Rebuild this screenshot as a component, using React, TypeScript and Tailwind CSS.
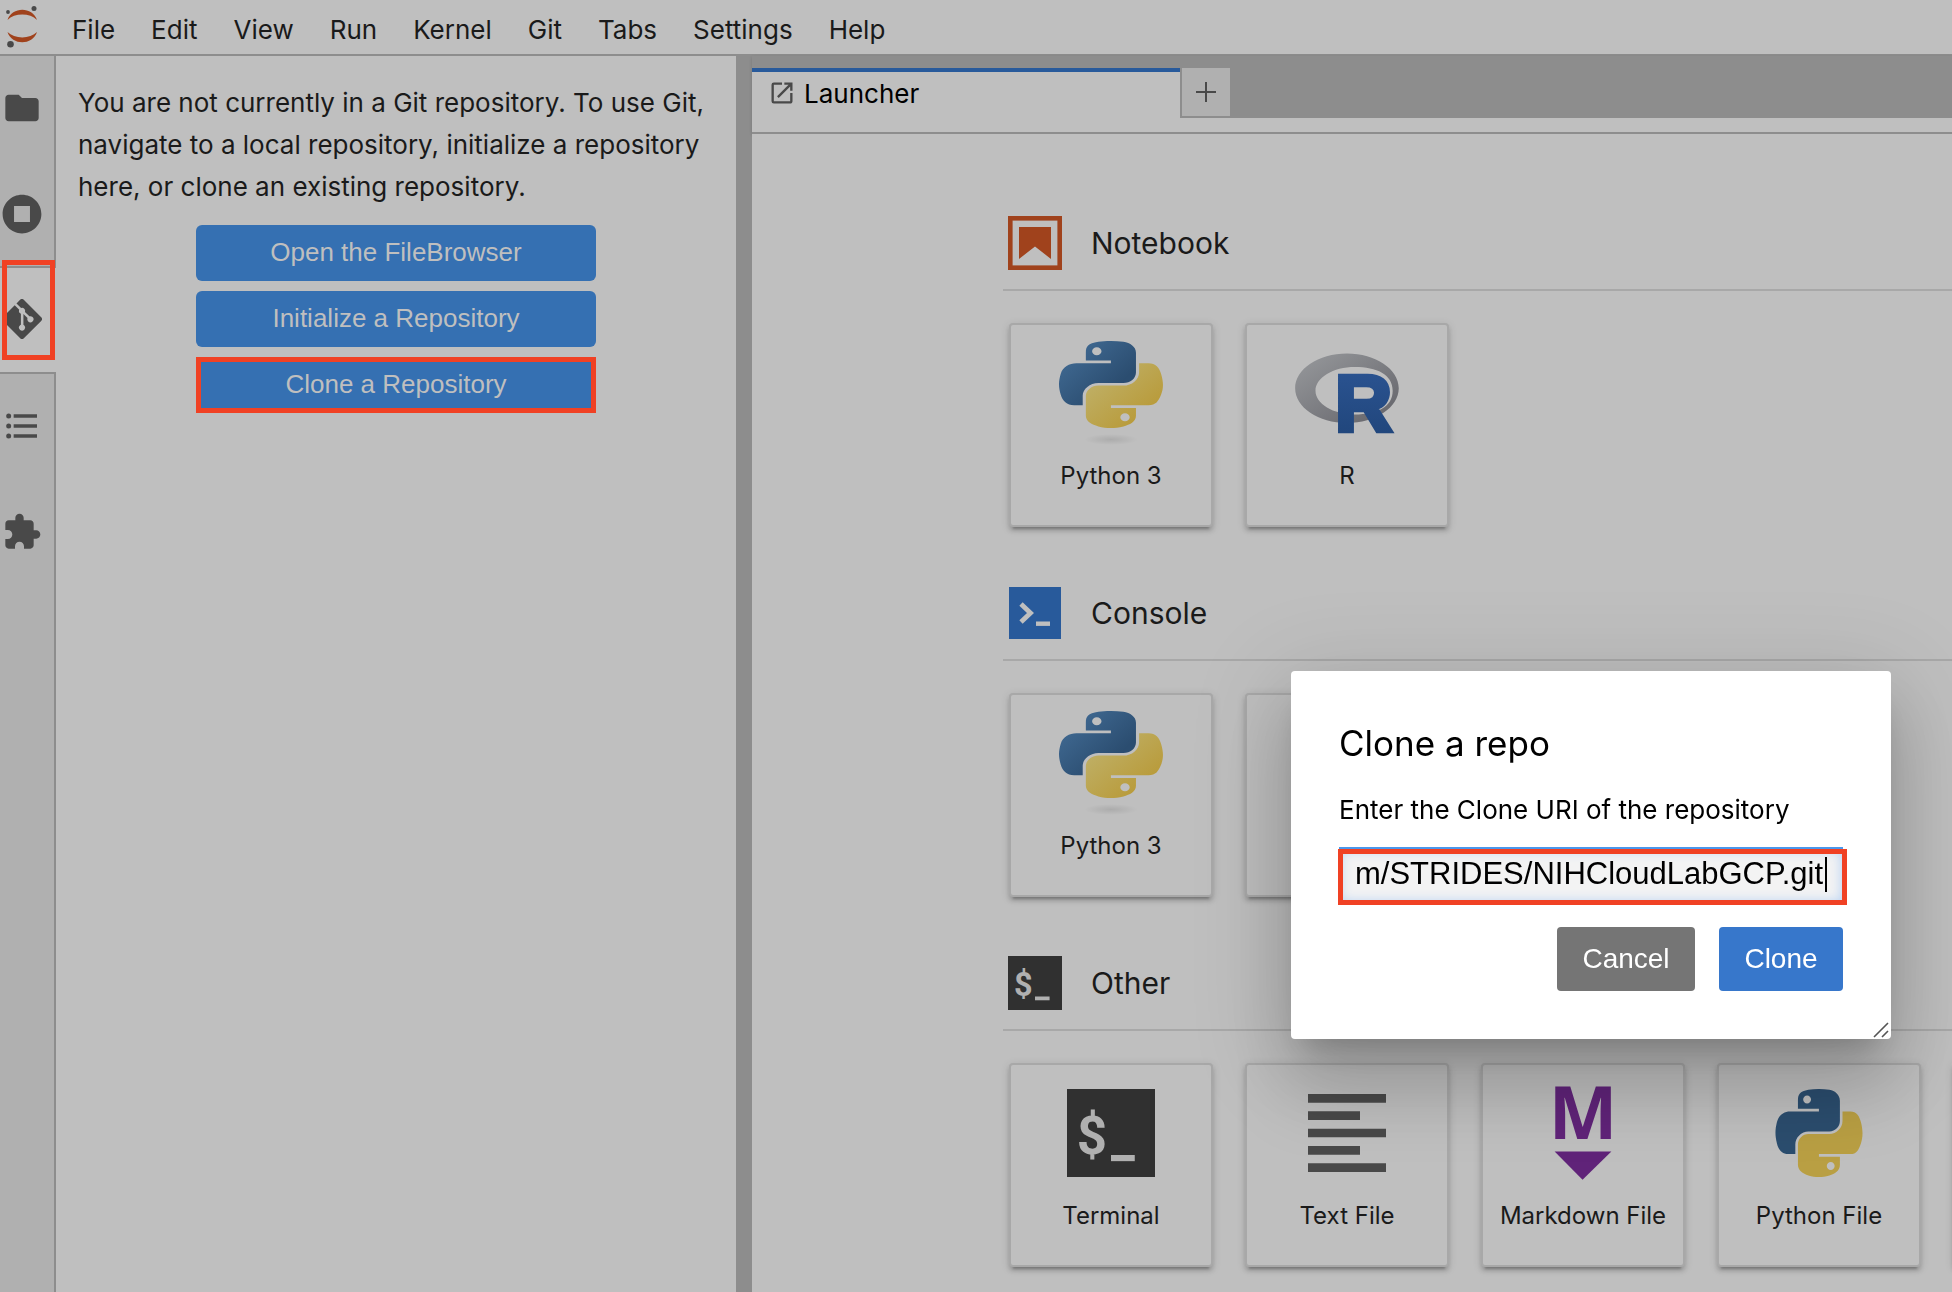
import React from "react";

type IconProps = { className?: string };

function JupyterLogo() {
  return (
    <svg viewBox="0 0 44 54" className="h-[54px] w-11 shrink-0" aria-hidden="true">
      <path d="M7.5 20C12 6.3 32.5 6.3 37 20C30 12.8 14.5 12.8 7.5 20Z" fill="#a0421c" />
      <path d="M7.5 32C12 45.7 32.5 45.7 37 32C30 39.2 14.5 39.2 7.5 32Z" fill="#a0421c" />
      <circle cx="34" cy="8.6" r="2.5" fill="#494949" />
      <circle cx="8" cy="12" r="1.9" fill="#494949" />
      <circle cx="10.5" cy="44.2" r="3.3" fill="#494949" />
    </svg>
  );
}

function FolderIcon() {
  return (
    <svg viewBox="0 0 24 24" className="size-10" fill="currentColor" aria-hidden="true">
      <path d="M10 4H4c-1.1 0-1.99.9-1.99 2L2 18c0 1.1.9 2 2 2h16c1.1 0 2-.9 2-2V8c0-1.1-.9-2-2-2h-8l-2-2z" />
    </svg>
  );
}

function RunningIcon() {
  return (
    <svg viewBox="0 0 512 512" className="size-10" fill="currentColor" aria-hidden="true">
      <path d="M256 8C119 8 8 119 8 256s111 248 248 248 248-111 248-248S393 8 256 8zm102 350H154V154h204z" />
    </svg>
  );
}

function GitIcon() {
  return (
    <svg viewBox="0 0 92 92" className="size-10" fill="currentColor" aria-hidden="true">
      <path d="M90.156 41.965 50.036 1.848a5.913 5.913 0 0 0-8.368 0l-8.332 8.332 10.566 10.566a7.03 7.03 0 0 1 7.23 1.684 7.043 7.043 0 0 1 1.673 7.277l10.183 10.184a7.026 7.026 0 0 1 7.278 1.672 7.04 7.04 0 0 1 0 9.957 7.05 7.05 0 0 1-9.965 0 7.044 7.044 0 0 1-1.528-7.66l-9.5-9.497V59.36a7.04 7.04 0 0 1 1.86 11.29 7.04 7.04 0 0 1-9.957 0 7.04 7.04 0 0 1 0-9.958 7.06 7.06 0 0 1 2.304-1.539V33.926a7.049 7.049 0 0 1-3.82-9.234L29.242 14.272 1.73 41.777a5.918 5.918 0 0 0 0 8.371L41.852 90.27a5.925 5.925 0 0 0 8.37 0l39.934-39.934a5.925 5.925 0 0 0 0-8.371" />
    </svg>
  );
}

function TocIcon() {
  return (
    <svg viewBox="0 0 24 24" className="size-10" fill="currentColor" aria-hidden="true">
      <path d="M7 5h14v2H7zM7 11h14v2H7zM7 17h14v2H7z" />
      <circle cx="4" cy="6" r="1.5" />
      <circle cx="4" cy="12" r="1.5" />
      <circle cx="4" cy="18" r="1.5" />
    </svg>
  );
}

function ExtensionIcon() {
  return (
    <svg viewBox="0 0 24 24" className="size-10" fill="currentColor" aria-hidden="true">
      <path d="M20.5 11H19V7c0-1.1-.9-2-2-2h-4V3.5C13 2.12 11.88 1 10.5 1S8 2.12 8 3.5V5H4c-1.1 0-1.99.9-1.99 2v3.8H3.5c1.49 0 2.7 1.21 2.7 2.7s-1.21 2.7-2.7 2.7H2V20c0 1.1.9 2 2 2h3.8v-1.5c0-1.49 1.21-2.7 2.7-2.7 1.49 0 2.7 1.21 2.7 2.7V22H17c1.1 0 2-.9 2-2v-4h1.5c1.38 0 2.5-1.12 2.5-2.5S21.88 11 20.5 11z" />
    </svg>
  );
}

function LaunchIcon() {
  return (
    <svg viewBox="0 0 24 24" className="size-7 text-[#494949]" fill="currentColor" aria-hidden="true">
      <path d="M19 19H5V5h7V3H5a2 2 0 0 0-2 2v14a2 2 0 0 0 2 2h14c1.1 0 2-.9 2-2v-7h-2v7zM14 3v2h3.59l-9.83 9.83 1.41 1.41L19 6.41V10h2V3h-7z" />
    </svg>
  );
}

const PY_BLUE =
  "M54.9188 0C50.3351.0222 45.9578.4131 42.1063 1.0947C30.7601 3.0992 28.7 7.2948 28.7 15.0322V25.2509H55.5125V28.6572H28.7H18.6375C10.8451 28.6572 4.0218 33.3409 1.8875 42.2509C-.5743 52.4639-.6835 58.8369 1.8875 69.5009C3.7935 77.4388 8.3451 83.0947 16.1375 83.0947H25.3563V70.8447C25.3563 61.9948 33.0134 54.1884 42.1063 54.1884H68.8875C76.3425 54.1884 82.2938 48.0503 82.2938 40.5634V15.0322C82.2938 7.7658 76.1638 2.3074 68.8875 1.0947C64.2815.3279 59.5024-.0204 54.9188 0ZM40.4188 8.2197C43.1884 8.2197 45.45 10.5185 45.45 13.3447C45.45 16.1609 43.1884 18.4384 40.4188 18.4384C37.6393 18.4384 35.3875 16.1609 35.3875 13.3447C35.3875 10.5185 37.6393 8.2197 40.4188 8.2197Z";
const PY_YELLOW =
  "M85.6375 28.6572V40.5634C85.6375 49.7941 77.8116 57.5634 68.8875 57.5634H42.1063C34.7704 57.5634 28.7 63.842 28.7 71.1884V96.7197C28.7 103.986 35.0186 108.2599 42.1063 110.3447C50.5935 112.8403 58.7324 113.2913 68.8875 110.3447C75.6378 108.3903 82.2938 104.4571 82.2938 96.7197V86.5009H55.5125V83.0947H82.2938H95.7C103.4925 83.0947 106.3963 77.6593 109.1063 69.5009C111.9056 61.1022 111.7865 53.0255 109.1063 42.2509C107.1805 34.4933 103.5023 28.6572 95.7 28.6572H85.6375ZM70.575 93.3134C73.3545 93.3134 75.6063 95.591 75.6063 98.4072C75.6063 101.2334 73.3545 103.5322 70.575 103.5322C67.8055 103.5322 65.5438 101.2334 65.5438 98.4072C65.5438 95.591 67.8055 93.3134 70.575 93.3134Z";

function PythonKernelIcon() {
  return (
    <svg viewBox="0 0 104 104" className="size-[104px]" aria-hidden="true">
      <defs>
        <linearGradient id="pyBlue" x1="0" y1="0" x2="0.75" y2="0.7">
          <stop offset="0" stopColor="#45709a" />
          <stop offset="1" stopColor="#2b4d70" />
        </linearGradient>
        <linearGradient id="pyYellow" x1="0.1" y1="0.2" x2="0.7" y2="0.8">
          <stop offset="0" stopColor="#bfb067" />
          <stop offset="1" stopColor="#b99c3d" />
        </linearGradient>
        <radialGradient id="pyShadow">
          <stop offset="0" stopColor="#000" stopOpacity="0.1" />
          <stop offset="1" stopColor="#000" stopOpacity="0" />
        </radialGradient>
      </defs>
      <svg width="104" height="87" viewBox="0 0 111.2 112.4" preserveAspectRatio="none">
        <path d={PY_BLUE} fill="url(#pyBlue)" />
        <path d={PY_YELLOW} fill="url(#pyYellow)" />
      </svg>
      <ellipse cx="52" cy="98.5" rx="27" ry="5.5" fill="url(#pyShadow)" />
    </svg>
  );
}

function PythonFileIcon() {
  return (
    <svg viewBox="0 0 111.2 112.4" className="size-[88px]" aria-hidden="true">
      <path d={PY_BLUE} fill="#2b4d6e" />
      <path d={PY_YELLOW} fill="#b99f43" />
    </svg>
  );
}

function RLogo() {
  return (
    <svg viewBox="0 0 104 104" className="size-[104px]" aria-hidden="true">
      <defs>
        <linearGradient id="rRing" x1="0" y1="0" x2="1" y2="1">
          <stop offset="0" stopColor="#989a9d" />
          <stop offset="1" stopColor="#626268" />
        </linearGradient>
        <linearGradient id="rLetter" x1="0" y1="0" x2="0" y2="1">
          <stop offset="0" stopColor="#2c5594" />
          <stop offset="1" stopColor="#1f4478" />
        </linearGradient>
      </defs>
      <path
        transform="translate(0 12) scale(0.1437)"
        fillRule="evenodd"
        fill="url(#rRing)"
        d="M361.453 485.937C162.329 485.937.906 377.828.906 244.469C.906 111.109 162.329 3 361.453 3C560.578 3 722 111.109 722 244.469C722 377.828 560.578 485.937 361.453 485.937ZM416.641 97.406C265.289 97.406 142.594 171.314 142.594 262.484C142.594 353.654 265.289 427.562 416.641 427.562C567.992 427.562 679.687 377.033 679.687 262.484C679.687 147.971 567.992 97.406 416.641 97.406Z"
      />
      <text
        x="40"
        y="90"
        fontFamily="'Liberation Sans', Arial, sans-serif"
        fontWeight="700"
        fontSize="79"
        fill="url(#rLetter)"
        stroke="url(#rLetter)"
        strokeWidth="4.5"
      >
        R
      </text>
    </svg>
  );
}

function TerminalIcon({ className }: IconProps) {
  return (
    <svg viewBox="2 2 20 20" className={className} aria-hidden="true">
      <rect x="2" y="2" width="20" height="20" fill="#303030" />
      <text x="4.2" y="16.7" fontFamily="Roboto, sans-serif" fontWeight="700" fontSize="12" fill="#b0b0b0">
        $
      </text>
      <rect x="12" y="17" width="5.4" height="1.4" fill="#b0b0b0" />
    </svg>
  );
}

function NotebookIcon() {
  return (
    <svg viewBox="0 0 54 54" className="size-[54px]" aria-hidden="true">
      <rect x="2.3" y="2.3" width="49.4" height="49.4" fill="none" stroke="#a0421c" strokeWidth="4.6" />
      <path d="M11 11H43V43L27 30.5L11 43Z" fill="#a0421c" />
    </svg>
  );
}

function ConsoleIcon() {
  return (
    <svg viewBox="0 0 54 54" className="size-[54px]" aria-hidden="true">
      <rect x="1" y="1" width="52" height="52" fill="#285a9b" />
      <path d="M13 18L22.5 27L13 36" fill="none" stroke="#bfbfbf" strokeWidth="4.8" />
      <rect x="28" y="35.5" width="14" height="4.4" fill="#bfbfbf" />
    </svg>
  );
}

function TextFileIcon() {
  return (
    <svg viewBox="0 0 24 24" className="size-[104px]" fill="#494949" aria-hidden="true">
      <path d="M15 15H3v2h12v-2zm0-8H3v2h12V7zM3 13h18v-2H3v2zm0 8h18v-2H3v2zM3 3v2h18V3H3z" />
    </svg>
  );
}

function MarkdownIcon() {
  return (
    <svg viewBox="0 0 22 22" className="size-[104px] overflow-visible" aria-hidden="true">
      <text
        x="11"
        y="12.3"
        textAnchor="middle"
        fontFamily="'Open Sans', sans-serif"
        fontWeight="700"
        fontSize="15.4"
        fill="#602379"
      >
        M
      </text>
      <path d="M5 14.9h12l-6.1 6z" fill="#602379" />
    </svg>
  );
}

const MENUS = ["File", "Edit", "View", "Run", "Kernel", "Git", "Tabs", "Settings", "Help"];

const RAIL = [
  { label: "File Browser", icon: <FolderIcon />, active: false },
  { label: "Running Terminals and Kernels", icon: <RunningIcon />, active: false },
  { label: "Git", icon: <GitIcon />, active: true },
  { label: "Table of Contents", icon: <TocIcon />, active: false },
  { label: "Extension Manager", icon: <ExtensionIcon />, active: false },
];

const SECTIONS = [
  {
    title: "Notebook",
    icon: <NotebookIcon />,
    cards: [
      { label: "Python 3", icon: <PythonKernelIcon /> },
      { label: "R", icon: <RLogo /> },
    ],
  },
  {
    title: "Console",
    icon: <ConsoleIcon />,
    cards: [
      { label: "Python 3", icon: <PythonKernelIcon /> },
      { label: "", icon: null },
    ],
  },
  {
    title: "Other",
    icon: <TerminalIcon className="size-[54px]" />,
    cards: [
      { label: "Terminal", icon: <TerminalIcon className="size-[88px]" /> },
      { label: "Text File", icon: <TextFileIcon /> },
      { label: "Markdown File", icon: <MarkdownIcon /> },
      { label: "Python File", icon: <PythonFileIcon /> },
      { label: "", icon: null },
    ],
  },
];

function MenuBar() {
  return (
    <header className="flex h-14 shrink-0 items-center border-b-2 border-[#8d8d8d]">
      <JupyterLogo />
      <nav className="flex pt-1.5 pl-2.5">
        {MENUS.map((m) => (
          <button key={m} type="button" className="px-[18px] text-[26px] leading-8">
            {m}
          </button>
        ))}
      </nav>
    </header>
  );
}

function ActivityRail() {
  return (
    <nav className="flex w-14 shrink-0 flex-col bg-[#b0b0b0] text-[#494949]">
      {RAIL.map((item) => (
        <button
          key={item.label}
          type="button"
          aria-label={item.label}
          className={
            item.active
              ? "relative -mt-0.5 flex h-[108px] items-center border-y-2 border-[#8d8d8d] bg-[#bfbfbf] pb-0.5 pl-0.5"
              : "flex h-[106px] items-center border-r-2 border-[#8d8d8d] pb-0.5 pl-0.5"
          }
        >
          {item.icon}
          {item.active && (
            <span className="absolute -top-2 right-px left-0.5 h-[100px] border-[5px] border-[#f04124]" />
          )}
        </button>
      ))}
      <div className="flex-1 border-r-2 border-[#8d8d8d]" />
    </nav>
  );
}

function GitPanel() {
  const button =
    "relative h-14 w-[400px] rounded-md bg-[#3570b2] pb-0.5 font-['Liberation_Sans',Arial,sans-serif] text-[26px] text-[#bfbfbf]";
  return (
    <aside className="flex w-[680px] shrink-0 flex-col items-center px-[22px] pt-[26px]">
      <p className="text-[26px] leading-[42px]">
        You are not currently in a Git repository. To use Git, navigate to a local repository, initialize a repository
        here, or clone an existing repository.
      </p>
      <div className="mt-[17px] flex flex-col gap-2.5">
        <button type="button" className={button}>
          Open the FileBrowser
        </button>
        <button type="button" className={button}>
          Initialize a Repository
        </button>
        <button type="button" className={button}>
          Clone a Repository
          <span className="absolute inset-0 border-[5px] border-[#f04124]" />
        </button>
      </div>
    </aside>
  );
}

function TabBar() {
  return (
    <div className="shrink-0 border-b-2 border-[#8d8d8d] bg-[#bfbfbf] shadow-[0_1px_3px_rgba(0,0,0,0.15)]">
      <div className="flex h-[62px] items-end bg-[#8d8d8d]">
        <div className="flex h-[50px] w-[428px] items-center gap-2 border-t-4 border-[#285a9b] bg-[#bfbfbf] pb-1 pl-4">
          <LaunchIcon />
          <span className="pt-0.5 text-[26px] leading-8 text-black">Launcher</span>
        </div>
        <button
          type="button"
          aria-label="New Launcher"
          className="mb-0.5 ml-0.5 flex size-12 items-center justify-center bg-[#b0b0b0]"
        >
          <svg viewBox="0 0 20 20" className="size-5" stroke="#494949" strokeWidth="2" aria-hidden="true">
            <path d="M10 0V20M0 10H20" />
          </svg>
        </button>
      </div>
      <div className="h-3.5" />
    </div>
  );
}

function Launcher() {
  return (
    <div className="flex-1 overflow-hidden bg-[#bfbfbf] pt-[82px] pl-[251px]">
      {SECTIONS.map((s) => (
        <section key={s.title} className="mb-[59px]">
          <header className="flex items-center gap-[29px] border-b-2 border-[#a8a8a8] pb-[19px] pl-[5px]">
            {s.icon}
            <h2 className="text-[30px] leading-9">{s.title}</h2>
          </header>
          <div className="mt-8 flex gap-8 pl-1.5">
            {s.cards.map((c, i) => (
              <button
                key={i}
                type="button"
                aria-hidden={c.label === "" ? true : undefined}
                className="flex size-[204px] shrink-0 flex-col items-center rounded border-2 border-[#a8a8a8] bg-[#bfbfbf] pt-4 shadow-[0_6px_2px_-4px_rgba(0,0,0,0.2),0_4px_4px_0_rgba(0,0,0,0.14),0_2px_10px_0_rgba(0,0,0,0.12)]"
              >
                <span className="flex size-[104px] items-center justify-center">{c.icon}</span>
                <span className="mt-[17px] text-[24px] leading-7 whitespace-nowrap">{c.label}</span>
              </button>
            ))}
          </div>
        </section>
      ))}
    </div>
  );
}

function CloneDialog() {
  return (
    <div className="fixed inset-0 flex items-end justify-end pr-[61px] pb-[253px]">
      <div
        role="dialog"
        aria-labelledby="clone-title"
        className="relative flex w-[600px] flex-col rounded bg-white p-12 text-black shadow-[0_22px_30px_-14px_rgba(0,0,0,0.2),0_48px_76px_6px_rgba(0,0,0,0.14),0_18px_92px_16px_rgba(0,0,0,0.12)]"
      >
        <h1 id="clone-title" className="text-[35px] leading-[48px]">
          Clone a repo
        </h1>
        <label htmlFor="clone-uri" className="mt-[27px] text-[26px] leading-8">
          Enter the Clone URI of the repository
        </label>
        <div className="relative mt-[21px]">
          <input
            id="clone-uri"
            type="text"
            defaultValue="m/STRIDES/NIHCloudLabGCP.git"
            className="h-14 w-full border-t-2 border-[#4a97ec] bg-[#f3f3f3] pb-1 pl-4 font-['Liberation_Sans',Arial,sans-serif] text-[31px] shadow-[inset_0_0_12px_2px_#b8d2f3] outline-none"
          />
          <span className="pointer-events-none absolute top-2.5 right-4 h-[35px] w-0.5 bg-black" />
          <span className="pointer-events-none absolute top-0.5 -right-1 -bottom-0.5 -left-px border-[5px] border-[#f04124]" />
        </div>
        <div className="mt-6 flex justify-end gap-6 font-['Liberation_Sans',Arial,sans-serif] text-[28px] text-white">
          <button type="button" className="h-16 w-[138px] rounded bg-[#757575]">
            Cancel
          </button>
          <button type="button" className="h-16 w-[124px] rounded bg-[#3777cb]">
            Clone
          </button>
        </div>
        <svg
          viewBox="0 0 16 16"
          className="absolute right-0.5 bottom-px size-4"
          stroke="#555"
          strokeWidth="1.6"
          aria-hidden="true"
        >
          <path d="M1 15L15 1M9 15L15 9" />
        </svg>
      </div>
    </div>
  );
}

export default function App() {
  return (
    <div className="flex h-screen flex-col overflow-hidden bg-[#bfbfbf] font-[Inter,sans-serif] text-[#1a1a1a]">
      <MenuBar />
      <div className="flex min-h-0 flex-1">
        <ActivityRail />
        <GitPanel />
        <main className="flex min-w-0 flex-1 flex-col border-l-[16px] border-[#8d8d8d]">
          <TabBar />
          <Launcher />
        </main>
      </div>
      <CloneDialog />
    </div>
  );
}
